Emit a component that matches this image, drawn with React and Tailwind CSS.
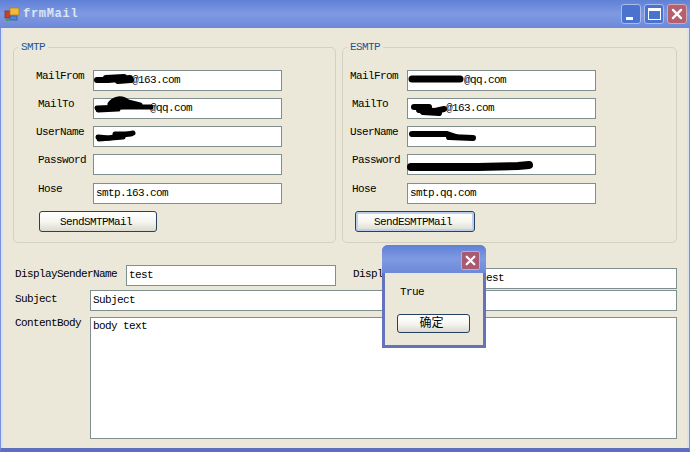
import React from 'react';

const font = "font-['Liberation_Mono','Noto_Sans_CJK_SC',monospace] text-[11px] leading-[12px] tracking-[-0.6px] text-black";

// black marker strokes hiding the private values
const Scribble = ({ className, box, paths, width = 6 }) => (
    <svg className={`absolute overflow-visible pointer-events-none ${className}`} viewBox={box}>
        {paths.map((d, i) => (
            <path key={i} d={d} fill="none" stroke="#000" strokeWidth={width} strokeLinecap="round" strokeLinejoin="round" />
        ))}
    </svg>
);

const Field = ({ value, className = '', children }) => (
    <div className={`relative h-[21px] border border-[#7f8f90] bg-white ${className}`}>
        <input
            readOnly
            value={value}
            className={`block h-full w-full bg-transparent pb-[2px] pl-[2px] outline-none ${font}`}
        />
        {children}
    </div>
);

const Row = ({ label, labelPad, labelClass = 'w-[79px]', value, className = '', children }) => (
    <div className={`flex items-start ${className}`}>
        <div className={`shrink-0 whitespace-pre ${labelClass} ${font}`} style={{ paddingLeft: labelPad }}>
            {label}
        </div>
        <Field value={value} className="w-[189px]">
            {children}
        </Field>
    </div>
);

const XpButton = ({ className = '', children }) => (
    <button
        type="button"
        className={`block h-[21px] rounded-[3px] border border-[#26405f] bg-gradient-to-b from-white via-[#f6f6f0] to-[#dcdad0] pr-[4px] ${font} ${className}`}
    >
        {children}
    </button>
);

const CloseIcon = () => (
    <svg viewBox="0 0 20 20" className="h-full w-full">
        <path d="M5.5 5.5 L14.5 14.5 M14.5 5.5 L5.5 14.5" stroke="#fff" strokeWidth="2.6" strokeLinecap="round" />
    </svg>
);

const Group = ({ title, className = '', children }) => (
    <fieldset className={`h-[202px] rounded-[5px] border border-[#d3d1c0] ${className}`}>
        <legend className={`ml-[4px] px-[3px] ${font} !text-[#1d5596]`}>{title}</legend>
        {children}
    </fieldset>
);

const WindowIcon = () => (
    <svg viewBox="0 0 16 16" className="h-[16px] w-[16px]">
        <rect x="1" y="5" width="5" height="7" fill="#c9402e" stroke="#7a3b2e" strokeWidth="0.8" />
        <rect x="6" y="2" width="9" height="7" fill="#f4b93c" stroke="#a8802e" strokeWidth="0.8" />
        <rect x="6" y="10" width="7" height="4" fill="#4f86d8" stroke="#3a5a9a" strokeWidth="0.8" />
        <rect x="2" y="13" width="3" height="2" fill="#4a9a5a" />
    </svg>
);

const App = () => {
    return (
        <div className="relative flex h-[452px] w-[690px] flex-col overflow-hidden bg-[#ebe8d9]">
            {/* title bar */}
            <div className="flex h-[28px] shrink-0 items-center bg-gradient-to-b from-[#5f80d6] via-[#7f9ae2] to-[#6c88d8] pl-[4px] pr-[3px]">
                <WindowIcon />
                <span className="ml-[3px] font-['Liberation_Mono',monospace] text-[12px] font-bold tracking-[0.7px] text-[#dce4f6]">frmMail</span>
                <div className="ml-auto flex gap-[3px]">
                    <div className="flex h-[20px] w-[20px] items-end rounded-[3px] border border-[#a9bcec] bg-[#4a72cf] px-[4px] pb-[3px]">
                        <div className="h-[3px] w-[7px] bg-white"></div>
                    </div>
                    <div className="flex h-[20px] w-[20px] items-center justify-center rounded-[3px] border border-[#a9bcec] bg-[#4a72cf]">
                        <div className="h-[12px] w-[13px] border border-t-[3px] border-white"></div>
                    </div>
                    <div className="h-[20px] w-[20px] rounded-[3px] border border-[#cfa9b8] bg-[#b5606f]">
                        <CloseIcon />
                    </div>
                </div>
            </div>

            {/* form body */}
            <div className="flex-1 border-x border-x-[#7c8fd6] border-b-[4px] border-b-[#5f6ec0]">
                <div className="h-full border-x-[2px] border-x-[#dbe1f2] pl-[10px] pt-[13px]">
                    <div className="flex gap-[6px]">
                        <Group title="SMTP" className="w-[323px]">
                            <Row label="MailFrom" labelPad={22} value="      @163.com" className="mt-[17px]">
                                <Scribble className="left-0 top-[3px] h-[10px] w-[40px]" box="0 0 40 10" width={6} paths={['M3 6 L14 6 L26 5 L36 4', 'M12 4 L30 3', 'M24 7 L37 6']} />
                            </Row>
                            <Row label="MailTo" labelPad={24} value="         @qq.com" className="mt-[7px]">
                                <Scribble className="left-0 top-[-4px] h-[18px] w-[62px]" box="0 0 62 18" width={5} paths={['M3 13 L30 12 L57 12', 'M16 9 C20 3 28 2 34 7 L46 10', 'M20 8 L42 10', 'M4 15 L24 14']} />
                            </Row>
                            <Row label="UserName" labelPad={22} value="" className="mt-[7px]">
                                <Scribble className="left-[1px] top-[3px] h-[12px] w-[41px]" box="0 0 41 12" width={5} paths={['M3 7 L14 8 L24 6 L38 3', 'M4 9 L28 7', 'M20 4 L36 4']} />
                            </Row>
                            <Row label="Password" labelPad={24} value="" className="mt-[7px]" />
                            <Row label="Hose" labelPad={24} value="smtp.163.com" className="mt-[8px]" />
                            <XpButton className="ml-[25px] mt-[7px] w-[118px]">SendSMTPMail</XpButton>
                        </Group>
                        <Group title="ESMTP" className="w-[335px]">
                            <Row label="MailFrom" labelPad={7} labelClass="w-[64px]" value="         @qq.com" className="mt-[17px]">
                                <Scribble className="left-0 top-[3px] h-[10px] w-[56px]" box="0 0 56 10" width={7} paths={['M4 5 L52 5']} />
                            </Row>
                            <Row label="MailTo" labelPad={9} labelClass="w-[64px]" value="      @163.com" className="mt-[7px]">
                                <Scribble className="left-[3px] top-[4px] h-[13px] w-[37px]" box="0 0 37 13" width={6} paths={['M3 4 L18 4', 'M8 7 L24 8 L33 6', 'M12 9 L28 10']} />
                            </Row>
                            <Row label="UserName" labelPad={7} labelClass="w-[64px]" value="" className="mt-[7px]">
                                <Scribble className="left-[1px] top-[3px] h-[12px] w-[66px]" box="0 0 66 12" width={6} paths={['M3 4 L38 4 L47 7', 'M40 7 L64 8']} />
                            </Row>
                            <Row label="Password" labelPad={9} labelClass="w-[64px]" value="" className="mt-[7px]">
                                <Scribble className="left-0 top-[3px] h-[14px] w-[125px]" box="0 0 125 14" width={8} paths={['M3 9 L70 9 L110 8 L121 7']} />
                            </Row>
                            <Row label="Hose" labelPad={9} labelClass="w-[64px]" value="smtp.qq.com" className="mt-[8px]" />
                            <XpButton className="ml-[12px] mt-[7px] w-[120px] shadow-[inset_0_0_0_2px_#bcd0ee]">SendESMTPMail</XpButton>
                        </Group>
                    </div>

                    {/* display names */}
                    <div className="mt-[22px] flex items-start">
                        <div className={`w-[113px] shrink-0 pl-[2px] pt-[3px] ${font}`}>DisplaySenderName</div>
                        <Field value="test" className="w-[210px]" />
                        <div className={`ml-[17px] w-[124px] shrink-0 pt-[3px] ${font}`}>DisplayReceiveName</div>
                        <Field value="test" className="mt-[3px] w-[200px]" />
                    </div>

                    <div className="mt-[1px] flex items-start">
                        <div className={`w-[77px] shrink-0 pl-[2px] pt-[3px] ${font}`}>Subject</div>
                        <Field value="Subject" className="w-[587px]" />
                    </div>

                    <div className="mt-[6px] flex items-start">
                        <div className={`w-[77px] shrink-0 pl-[2px] ${font}`}>ContentBody</div>
                        <textarea
                            readOnly
                            value="body text"
                            className={`block h-[122px] w-[587px] resize-none border border-[#7f8f90] bg-white pl-[2px] pt-[2px] outline-none ${font}`}
                        />
                    </div>
                </div>
            </div>

            {/* message box */}
            <div className="absolute left-[382px] top-[245px] flex h-[103px] w-[104px] flex-col rounded-t-[6px] border-x-[3px] border-b-[3px] border-[#6572bd] bg-[#ebe8d9]">
                <div className="-mx-[3px] flex h-[28px] shrink-0 items-start justify-end rounded-t-[6px] bg-gradient-to-b from-[#5f80d6] via-[#7f9ae2] to-[#6c88d8] pr-[6px] pt-[6px]">
                    <div className="h-[19px] w-[19px] rounded-[2px] border border-[#cfa9b8] bg-[#a85a70]">
                        <CloseIcon />
                    </div>
                </div>
                <div className={`ml-[15px] mt-[13px] ${font}`}>True</div>
                <XpButton className="ml-[12px] mt-[16px] !h-[19px] w-[73px] !text-[12px] !tracking-normal">确定</XpButton>
            </div>
        </div>
    );
};

export default App;
